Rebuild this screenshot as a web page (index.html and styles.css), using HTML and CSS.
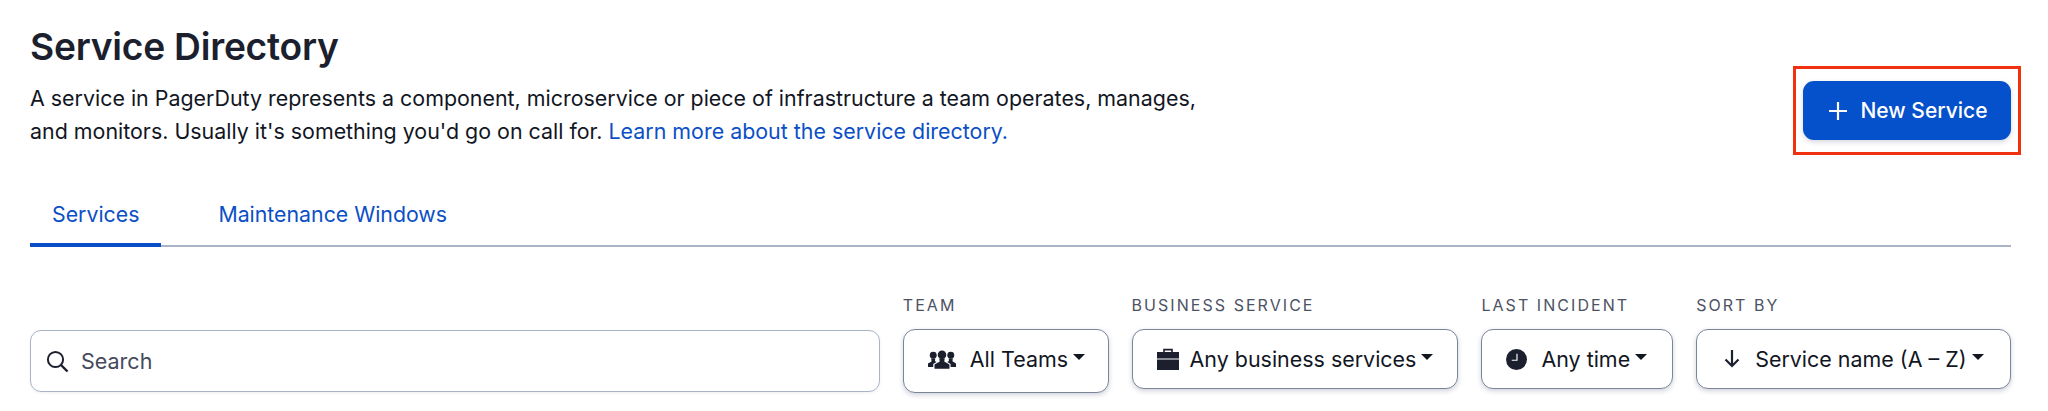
FILE: index.html
```html
<!DOCTYPE html>
<html lang="en">
<head>
<meta charset="utf-8">
<title>Service Directory</title>
<link rel="stylesheet" href="styles.css">
</head>
<body>
<main class="page">
  <header class="head">
    <div class="intro">
      <h1 class="title">Service Directory</h1>
      <p class="desc">A service in PagerDuty represents a component, microservice or piece of infrastructure a team operates, manages, and monitors. Usually it's something you'd go on call for. <a class="link" href="#">Learn more about the service directory.</a></p>
    </div>
    <button class="new-btn" type="button">
      <svg class="plus" viewBox="0 0 18 18" width="18" height="18" aria-hidden="true"><path d="M9 0v18M0 9h18" stroke="#fff" stroke-width="2.2" fill="none"/></svg>
      New Service
    </button>
  </header>

  <nav class="tabs">
    <a class="tab tab-active" href="#">Services</a>
    <a class="tab" href="#">Maintenance Windows</a>
  </nav>

  <section class="filters">
    <label class="search">
      <svg class="search-icon" viewBox="0 0 24 24" width="24" height="24" aria-hidden="true"><circle cx="10.5" cy="10.5" r="7.6" fill="none" stroke="#1b1f2e" stroke-width="2"/><path d="M16 16l6.5 6.5" stroke="#1b1f2e" stroke-width="2.4" fill="none"/></svg>
      <span class="search-text">Search</span>
    </label>

    <div class="filter">
      <div class="filter-label">TEAM</div>
      <button class="select select-tall" type="button">
        <svg class="ico" viewBox="0 0 30 22" width="28" height="21" aria-hidden="true"><g fill="#1b1f2e"><circle cx="15" cy="6" r="4.6"/><path d="M12 10h6l-.6 3.2 5.6 3.2V21H7v-4.6l5.6-3.2z"/><circle cx="5.6" cy="6.5" r="3.7"/><path d="M3.4 10h4.4l-.4 2.6 1.8 1-3.6 2.2V19H0v-3.6l3.8-2.2z"/><circle cx="24.4" cy="6.5" r="3.7"/><path d="M22.2 10h4.4l-.4 3 3.8 2.4V19h-5.8v-3.2l-3.6-2.2 1.8-1z"/></g></svg>
        <span>All Teams</span><i class="caret"></i>
      </button>
    </div>

    <div class="filter">
      <div class="filter-label">BUSINESS SERVICE</div>
      <button class="select select-case" type="button">
        <svg class="ico ico-case" viewBox="0 0 22 22" width="22" height="22" aria-hidden="true"><path d="M7 4V1.6h8V4" fill="none" stroke="#1b1f2e" stroke-width="1.6"/><path fill="#1b1f2e" d="M0 4h22v6.5H0zM0 11.5h22V22H0z"/></svg>
        <span>Any business services</span><i class="caret"></i>
      </button>
    </div>

    <div class="filter">
      <div class="filter-label">LAST INCIDENT</div>
      <button class="select select-roomy" type="button">
        <svg class="ico" viewBox="0 0 22 22" width="21" height="21" aria-hidden="true"><circle cx="11" cy="11" r="11" fill="#1b1f2e"/><path d="M11.5 5v6.8H6" fill="none" stroke="#fff" stroke-width="1.2"/></svg>
        <span>Any time</span><i class="caret"></i>
      </button>
    </div>

    <div class="filter">
      <div class="filter-label">SORT BY</div>
      <button class="select select-sort" type="button">
        <svg class="ico ico-sort" viewBox="0 0 16 18" width="16" height="18" aria-hidden="true"><path d="M8 0v16M1.5 9.5L8 16l6.5-6.5" fill="none" stroke="#1b1f2e" stroke-width="2.2"/></svg>
        <span>Service name (A – Z)</span><i class="caret"></i>
      </button>
    </div>
  </section>
</main>
</body>
</html>
```

FILE: styles.css
```css
* { box-sizing: border-box; }

html, body { margin: 0; background: #fff; }

body {
  font-family: Inter, "Liberation Sans", sans-serif;
  color: #1b1f2e;
  overflow: hidden;
}

.page {
  width: 2048px;
  height: 411px;
  padding: 24px 37px 0 30px;
}

.head {
  display: flex;
  justify-content: space-between;
  align-items: flex-start;
}

.intro { width: 1180px; }

.title {
  margin: 0;
  font-size: 37.2px;
  line-height: 46px;
  font-weight: 600;
  letter-spacing: -0.25px;
}

.desc {
  margin: 12px 0 0;
  font-size: 21.42px;
  line-height: 33px;
  color: #12161f;
}

.link { color: #0b4fc6; text-decoration: none; }

.new-btn {
  position: relative;
  display: flex;
  align-items: center;
  justify-content: center;
  gap: 13px;
  width: 208px;
  height: 59px;
  margin-top: 57px;
  padding: 0 0 0 3px;
  border: 0;
  border-radius: 11px;
  background: #0550cb;
  color: #fff;
  font: 500 21px Inter, "Liberation Sans", sans-serif;
  box-shadow: 0 2px 5px rgba(40, 50, 90, .2);
}

.new-btn::after {
  content: "";
  position: absolute;
  inset: -15px -10px;
  border: 3px solid #f0300f;
}

.tabs {
  display: flex;
  gap: 35px;
  margin-top: 42px;
  border-bottom: 2px solid #a9b4c6;
}

.tab {
  padding: 9px 22px 14px;
  margin-bottom: -2px;
  font-size: 21.3px;
  line-height: 30px;
  color: #0b4fc6;
  text-decoration: none;
  border-bottom: 4px solid transparent;
}

.tab-active { border-bottom-color: #0b4fc6; }

.filters {
  display: flex;
  align-items: flex-start;
  gap: 23px;
  margin-top: 46px;
}

.search {
  display: flex;
  align-items: center;
  gap: 12px;
  flex: 1;
  height: 62px;
  margin-top: 37px;
  padding: 0 14px;
  border: 1.5px solid #a9b4c6;
  border-radius: 11px;
  box-shadow: 0 1px 3px rgba(40, 50, 90, .08);
}

.search-text { font-size: 21.5px; color: #454a5c; }

.filter { flex: none; }

.filter-label {
  height: 28px;
  margin-bottom: 8px;
  font-size: 16px;
  line-height: 24px;
  letter-spacing: 2.05px;
  color: #4d5264;
}

.select {
  display: flex;
  align-items: center;
  height: 60px;
  padding: 0 22px 0 24px;
  border: 1.5px solid #7b8598;
  border-radius: 12px;
  background: #fff;
  color: #12161f;
  font: 400 21.45px Inter, "Liberation Sans", sans-serif;
  box-shadow: 0 2px 5px rgba(40, 50, 90, .22);
}

.select-tall { height: 64px; padding-right: 22.5px; padding-bottom: 4px; }

.select-case { padding-right: 24px; }

.select-roomy { padding-right: 25px; }

.select-sort { padding-right: 26.5px; }

.ico { flex: none; margin-right: 14px; }

.ico-case { margin-right: 11px; }

.ico-sort { margin-left: 3px; margin-right: 15px; }

.caret {
  flex: none;
  width: 0;
  height: 0;
  margin: -4px 0 0 5px;
  border-left: 6.5px solid transparent;
  border-right: 6.5px solid transparent;
  border-top: 6.5px solid #12161f;
}
```
